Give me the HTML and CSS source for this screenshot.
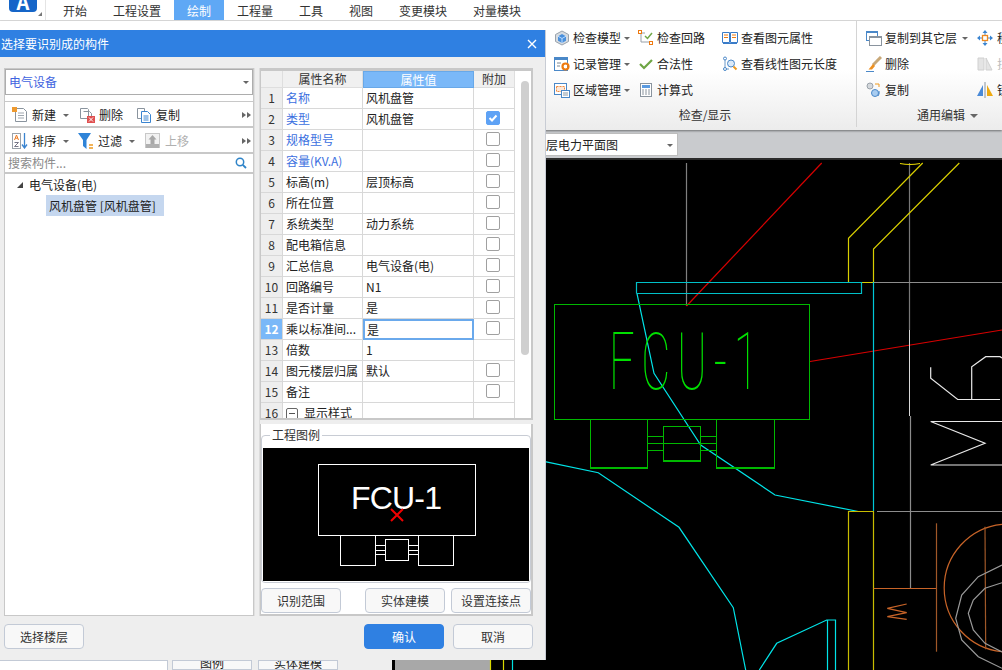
FILE: index.html
```html
<!DOCTYPE html>
<html lang="zh">
<head>
<meta charset="utf-8">
<title>选择要识别成的构件</title>
<link rel="stylesheet" href="styles.css">
</head>
<body>
<div class="app">
  <header class="tabbar">
    <div class="logo"><span class="logo-a">A</span></div>
    <span class="logo-tri"></span>
    <nav class="tabs">
      <span class="tab">开始</span><span class="tab">工程设置</span><span class="tab active">绘制</span><span class="tab">工程量</span><span class="tab">工具</span><span class="tab">视图</span><span class="tab">变更模块</span><span class="tab">对量模块</span>
    </nav>
  </header>
  <section class="ribbon">
    <div class="group g-check">
      <div class="cols">
        <div class="col c1">
          <div class="ri"><svg class="ic" viewBox="0 0 16 16"><path d="M8 1l6.500 3.500v7L8 15l-6.500-3.500v-7z" fill="#d6dbe0" stroke="#9aa3ad"/><path d="M8 4l4 2.200v4.600L8 13l-4-2.200V6.200z" fill="#4a90dc"/><path d="M4 6.200L8 8.500l4-2.300M8 8.500V13" stroke="#bcdcff" fill="none"/></svg><span>检查模型</span><i class="caret"></i></div>
          <div class="ri"><svg class="ic" viewBox="0 0 16 16"><rect x="0.500" y="1.500" width="13" height="13" fill="#fff" stroke="#4a88c8"/><rect x="0" y="1" width="14" height="3" fill="#4a88c8"/><path d="M3 7h4M3 10h3" stroke="#7a8894"/><circle cx="11.500" cy="10.500" r="3" fill="none" stroke="#ee7a10" stroke-width="2.200"/></svg><span>记录管理</span><i class="caret"></i></div>
          <div class="ri"><svg class="ic" viewBox="0 0 16 16"><rect x="0.500" y="1.500" width="12" height="11" fill="#fff" stroke="#4a88c8"/><rect x="2.500" y="4.500" width="8" height="5" fill="#fde8d8" stroke="#ee8a40" stroke-dasharray="2 1"/><rect x="7.500" y="8.500" width="8" height="7" fill="#fff" stroke="#4a88c8"/><path d="M9 11h5M9 13h5" stroke="#8a98a4"/></svg><span>区域管理</span><i class="caret"></i></div>
        </div>
        <div class="col c2">
          <div class="ri"><svg class="ic" viewBox="0 0 16 16"><path d="M3 3v9h9M3 3h4" stroke="#98a0a8" fill="none"/><rect x="0.500" y="0.500" width="3" height="3" fill="#fff" stroke="#ee7a10"/><rect x="11.500" y="11.500" width="3" height="3" fill="#fff" stroke="#ee7a10"/><path d="M7 6l2.500 2.500L14 3" stroke="#70a848" stroke-width="1.500" fill="none"/></svg><span>检查回路</span></div>
          <div class="ri"><svg class="ic" viewBox="0 0 16 16"><path d="M2 8l4 4 8-8" stroke="#6ea544" stroke-width="2.200" fill="none"/></svg><span>合法性</span></div>
          <div class="ri"><svg class="ic" viewBox="0 0 16 16"><rect x="2.500" y="1.500" width="11" height="13" fill="#fff" stroke="#8a949e"/><rect x="4" y="3" width="8" height="3" fill="#5a9ae0"/><path d="M4 8h2M7 8h2M10 8h2M4 10h2M7 10h2M10 10h2M4 12h2M7 12h2M10 12h2" stroke="#8a949e"/></svg><span>计算式</span></div>
        </div>
        <div class="col c3">
          <div class="ri"><svg class="ic" viewBox="0 0 16 16"><path d="M0.500 2.500h7v10h-7zM8.500 2.500h7v10h-7z" fill="#fff" stroke="#3a7cc8"/><path d="M2 5h4M2 7.500h4M10 5h4M10 7.500h4" stroke="#ee7a10"/><path d="M1 13.500h14" stroke="#3a7cc8"/></svg><span>查看图元属性</span></div>
          <div class="ri"><svg class="ic" viewBox="0 0 16 16"><path d="M3 3v10h4" stroke="#6a98c8" fill="none"/><circle cx="3" cy="2.500" r="1.500" fill="#fff" stroke="#4a88c8"/><circle cx="3" cy="13" r="1.500" fill="#fff" stroke="#4a88c8"/><circle cx="9" cy="7.500" r="3.500" fill="#dceaf8" stroke="#4a88c8"/><path d="M11.500 10.500l3 3" stroke="#ee9a20" stroke-width="2"/></svg><span>查看线性图元长度</span></div>
          <div class="ri"></div>
        </div>
      </div>
      <div class="glabel">检查/显示</div>
    </div>
    <div class="group g-edit">
      <div class="cols">
        <div class="col c4">
          <div class="ri"><svg class="ic" viewBox="0 0 16 16"><rect x="0.500" y="1.500" width="11" height="9" fill="#fff" stroke="#4a88c8"/><rect x="0" y="1" width="12" height="2" fill="#4a88c8"/><rect x="3.500" y="6.500" width="12" height="9" fill="#fff" stroke="#8a949e"/><rect x="3" y="6" width="13" height="2" fill="#8a949e"/></svg><span>复制到其它层</span><i class="caret far"></i></div>
          <div class="ri"><svg class="ic" viewBox="0 0 16 16"><path d="M15 1L7 9" stroke="#c8a878" stroke-width="3"/><path d="M7 8l2 2-3 3.500H2.500z" fill="#ee9020"/><path d="M0 15.500h8" stroke="#4a88c8"/></svg><span>删除</span></div>
          <div class="ri"><svg class="ic" viewBox="0 0 16 16"><circle cx="4" cy="4" r="3" fill="#d4d8dc" stroke="#9aa2aa"/><circle cx="9" cy="11" r="3.500" fill="#a8ccf0" stroke="#4a88c8"/><path d="M9 2h4v3" stroke="#ee9a20" fill="none"/><path d="M13 9a4.500 5 0 0 1-1 5" stroke="#4a88c8" fill="none"/></svg><span>复制</span></div>
        </div>
        <div class="col c5">
          <div class="ri"><svg class="ic" viewBox="0 0 16 16"><path d="M8 0l2.500 3h-5zM8 16l-2.500-3h5zM0 8l3-2.500v5zM16 8l-3 2.500v-5z" fill="#3a84d0"/><path d="M3 8h10M8 3v10" stroke="#3a84d0"/><rect x="5.500" y="5.500" width="5" height="5" fill="#fff" stroke="#ee8a20" stroke-width="1.300"/></svg><span>移动</span></div>
          <div class="ri"><svg class="ic" viewBox="0 0 16 16"><path d="M1 14V2h6v12zM9 14V2l6 12z" fill="#e4e4e4" stroke="#d0d0d0"/></svg><span class="off">拉伸</span></div>
          <div class="ri"><svg class="ic" viewBox="0 0 16 16"><path d="M0 14L6 3v11z" fill="#4a8ad8"/><path d="M10 14V3l6 11z" fill="#eeaa10"/><path d="M8 0v16" stroke="#8a949e"/></svg><span>镜像</span></div>
        </div>
      </div>
      <div class="glabel"><span>通用编辑</span><i class="caret wide"></i></div>
    </div>
  </section>
  <div class="subbar">
    <div class="layer-combo"><span>层电力平面图</span><i class="caret"></i></div>
  </div>
  <main class="work">
    <div class="under">
      <div class="under-panel"></div>
      <div class="under-tab">图例</div>
      <div class="under-tab">实体建模</div>
    </div>
    <svg class="cad" viewBox="392 160 610 510" preserveAspectRatio="none" role="img" aria-label="CAD 图纸">
      <rect x="395" y="160" width="95" height="510" fill="#a8a8a8"/>
      <g fill="none" stroke-width="1.200">
        <path d="M490.500 655v15M503.500 655v15" stroke="#d8d800"/>
        <path d="M512.500 655v15" stroke="#00e0e0"/>
        <path d="M686.500 163V306" stroke="#808080"/>
        <path d="M821.700 163L686.500 306" stroke="#d80000"/>
        <path d="M810 361.500L1002 330" stroke="#d80000"/>
        <path d="M909.500 163V330" stroke="#787878"/>
        <path d="M909.500 330V416" stroke="#d8d8d8" stroke-width="1"/>
        <path d="M910.500 416V588" stroke="#8c8c8c"/>
        <path d="M874 282.500H1002M877 511.500H1002" stroke="#8c8c8c"/>
        <path d="M922.700 163L848.500 238.300V282.500H873.500V249L959.300 163" stroke="#d8ce00"/>
        <path d="M900 163.500q10 2 20 0" stroke="#e8d800"/>
        <path d="M636.500 293.500V282.500H861.500V293.500H636.500" stroke="#00c0c8"/>
        <path d="M873.500 282V511" stroke="#00c8d8"/>
        <path d="M637 293.500L654 373.300L700.700 445L775 495L858.300 511.500" stroke="#00e4e8"/>
        <path d="M545 461.700L598.300 472.700L679 527.300L733.300 607.700L745.700 670" stroke="#00e4e8"/>
        <path d="M759.300 670L776.700 643.300L826.700 620H835.500V670M827.500 620V670" stroke="#00e4e8"/>
        <path d="M848.500 670V511.500H873.500V670" stroke="#c8bc00"/>
        <g stroke="#00b800" stroke-width="1.100" shape-rendering="crispEdges">
          <rect x="554.500" y="304.500" width="255" height="115"/>
          <rect x="590.500" y="419.500" width="57" height="48.500"/>
          <rect x="716.500" y="419.500" width="58" height="48.500"/>
          <rect x="663.500" y="426.500" width="37" height="34.500"/>
          <path d="M647.500 436.500H663.500M700.500 436.500H716.500M647.500 443.500H716.500M647.500 450.500H663.500M700.500 450.500H716.500"/>
        </g>
        <path d="M930.700 367.300V378.300L957.700 399.500H1000M971.700 399.500V366.700L985.700 356.700H1000L1002 358" stroke="#e8e8e8"/>
        <path d="M1002 421.500H930.700L985 443.300L930.700 465H1002" stroke="#e8e8e8"/>
        <path d="M873.500 588.500H936.500" stroke="#c86428"/>
        <path d="M936.500 523.300V651.700" stroke="#a05828"/>
        <path d="M1002 524.300A64 64 0 0 0 1002 651.700" stroke="#c86428"/>
        <path d="M985 526.700L985.700 649.300" stroke="#a05828"/>
        <path d="M906.700 604L887.300 608.300L906.700 612.700L887.300 616.700L906.700 619.300" stroke="#c86428"/>
        <path d="M1002 565L978.300 576.700L961.700 595L955.700 618.300L961.700 640L978.300 656.700L1002 668.300" stroke="#9a9a9a"/>
        <path d="M1002 582.700L985 588.300L973.300 600L968.300 613.300L973.300 630L985 643.300L1002 652" stroke="#9a9a9a"/>
      </g>
      <text class="cad-text" transform="translate(609 389) scale(0.56 1)">FCU-1</text>
    </svg>
  </main>

  <div class="dialog">
    <div class="dlg-title"><span>选择要识别成的构件</span><svg class="dlg-x" viewBox="0 0 10 10"><path d="M1 1l8 8M9 1l-8 8" stroke="#fff" stroke-width="1.400"/></svg></div>
    <div class="dlg-main">
      <aside class="left">
        <div class="combo-wrap"><div class="combo"><span>电气设备</span><i class="caret"></i></div></div>
        <div class="tb">
          <span class="tbtn"><svg class="ic" viewBox="0 0 16 16"><path d="M3.500 1.500h8l3 3v10h-11z" fill="#fff" stroke="#8a949e"/><path d="M6 6h6M6 8.500h6M6 11h6" stroke="#a0a8b0"/><rect x="0" y="0" width="5" height="5" fill="#ee9a30"/></svg><span>新建</span><i class="caret"></i></span>
          <span class="tbtn"><svg class="ic" viewBox="0 0 16 16"><path d="M1.500 1.500h7l1 1v9h-8z" fill="#fff" stroke="#8a949e"/><path d="M4.500 4.500h6l2 2v4" fill="none" stroke="#8a949e"/><rect x="8" y="9" width="8" height="7" fill="#e05050"/><path d="M10 10.500l4 4M14 10.500l-4 4" stroke="#fff"/></svg><span>删除</span></span>
          <span class="tbtn"><svg class="ic" viewBox="0 0 16 16"><path d="M1.500 1.500h7v10h-7z" fill="#fff" stroke="#8a949e"/><path d="M5.500 4.500h6l3 3v8h-9z" fill="#fff" stroke="#3a84d0"/><path d="M7.500 9h5M7.500 11h5M7.500 13h5" stroke="#3a84d0"/></svg><span>复制</span></span>
          <span class="more"><i></i><i></i></span>
        </div>
        <div class="tb r2">
          <span class="tbtn"><svg class="ic" viewBox="0 0 16 16"><rect x="0.500" y="0.500" width="8" height="15" fill="#fff" stroke="#9aa2aa"/><path d="M2.500 7l2-5 2 5M3.300 5.200h2.400" stroke="#ee7a20" fill="none"/><path d="M2.500 9.500h4l-4 4h4" stroke="#778" fill="none"/><path d="M12.500 0v14M10 11.500l2.500 3.500 2.500-3.500" stroke="#3a84d0" fill="none" stroke-width="1.300"/></svg><span>排序</span><i class="caret"></i></span>
          <span class="tbtn"><svg class="ic" viewBox="0 0 16 16"><path d="M0 0h13L8.500 7v9L5 13V7z" fill="#2f84d8"/><path d="M11 12h4M11 15h4" stroke="#ee9a20" stroke-width="1.300"/></svg><span>过滤</span><i class="caret"></i></span>
          <span class="tbtn dim"><svg class="ic" viewBox="0 0 16 16"><rect x="0.500" y="0.500" width="14" height="14" fill="#f2f2f2" stroke="#c8c8c8"/><rect x="1" y="11" width="13" height="4" fill="#b0b0b0"/><path d="M7.500 2l4 4.500H9.500V11h-4V6.500h-2z" fill="#a8a8a8"/></svg><span>上移</span></span>
          <span class="more"><i></i><i></i></span>
        </div>
        <div class="search"><span>搜索构件...</span><svg class="mag" viewBox="0 0 12 12"><circle cx="5" cy="5" r="3.700" fill="none" stroke="#2f84c8" stroke-width="1.500"/><path d="M7.800 7.800L11 11" stroke="#2f84c8" stroke-width="1.800"/></svg></div>
        <div class="tree">
          <div class="node"><i class="tri"></i><span>电气设备(电)</span></div>
          <div class="leaf"><span>风机盘管 [风机盘管]</span></div>
        </div>
      </aside>
      <div class="split"></div>
      <section class="right">
        <div class="grid-area">
          <div class="grid-clip">
          <table class="grid">
            <colgroup><col class="w-n"><col class="w-a"><col class="w-b"><col class="w-c"></colgroup>
            <thead><tr><th></th><th>属性名称</th><th class="sel">属性值</th><th>附加</th></tr></thead>
            <tbody>
              <tr><td class="n">1</td><td class="blue">名称</td><td>风机盘管</td><td></td></tr>
              <tr><td class="n">2</td><td class="blue">类型</td><td>风机盘管</td><td class="k"><b class="cb on"><svg viewBox="0 0 14 14"><path d="M3.500 7l2.500 2.500 4.500-5" stroke="#fff" stroke-width="2" fill="none"/></svg></b></td></tr>
              <tr><td class="n">3</td><td class="blue">规格型号</td><td></td><td class="k"><b class="cb"></b></td></tr>
              <tr><td class="n">4</td><td class="blue">容量(KV.A)</td><td></td><td class="k"><b class="cb"></b></td></tr>
              <tr><td class="n">5</td><td>标高(m)</td><td>层顶标高</td><td class="k"><b class="cb"></b></td></tr>
              <tr><td class="n">6</td><td>所在位置</td><td></td><td class="k"><b class="cb"></b></td></tr>
              <tr><td class="n">7</td><td>系统类型</td><td>动力系统</td><td class="k"><b class="cb"></b></td></tr>
              <tr><td class="n">8</td><td>配电箱信息</td><td></td><td class="k"><b class="cb"></b></td></tr>
              <tr><td class="n">9</td><td>汇总信息</td><td>电气设备(电)</td><td class="k"><b class="cb"></b></td></tr>
              <tr><td class="n">10</td><td>回路编号</td><td>N1</td><td class="k"><b class="cb"></b></td></tr>
              <tr><td class="n">11</td><td>是否计量</td><td>是</td><td class="k"><b class="cb"></b></td></tr>
              <tr><td class="n cur">12</td><td>乘以标准间...</td><td class="edit">是</td><td class="k"><b class="cb"></b></td></tr>
              <tr><td class="n">13</td><td>倍数</td><td>1</td><td></td></tr>
              <tr><td class="n">14</td><td>图元楼层归属</td><td>默认</td><td class="k"><b class="cb"></b></td></tr>
              <tr><td class="n">15</td><td>备注</td><td></td><td class="k"><b class="cb"></b></td></tr>
              <tr><td class="n">16</td><td class="sect"><i class="minus"></i>显示样式</td><td></td><td></td></tr>
            </tbody>
          </table>
          </div>
          <div class="vbar"><div class="thumb"></div></div>
        </div>
        <div class="lower">
          <fieldset class="legend-box">
            <legend>工程图例</legend>
            <svg class="preview" viewBox="263 448 266 133" role="img" aria-label="工程图例">
              <g fill="none" stroke="#fff" stroke-width="1" shape-rendering="crispEdges">
                <rect x="318.500" y="464.500" width="157" height="71"/>
                <rect x="340.500" y="535.500" width="35" height="30"/>
                <rect x="418.500" y="535.500" width="35" height="30"/>
                <rect x="385.500" y="539.500" width="23" height="21"/>
                <path d="M375.500 545.500H385.500M408.500 545.500H418.500M375.500 550.500H385.500M408.500 550.500H418.500M375.500 554.500H385.500M408.500 554.500H418.500"/>
              </g>
              <text class="pv-text" x="351" y="509">FCU-1</text>
              <path d="M391 509l12 12M403 509l-12 12" stroke="#f00000" stroke-width="2"/>
            </svg>
          </fieldset>
          <div class="lower-btns">
            <button class="btn">识别范围</button>
            <span class="grow"></span>
            <button class="btn">实体建模</button>
            <button class="btn">设置连接点</button>
          </div>
        </div>
      </section>
    </div>
    <footer class="dlg-foot">
      <button class="btn">选择楼层</button>
      <span class="grow"></span>
      <button class="btn primary">确认</button>
      <button class="btn">取消</button>
    </footer>
  </div>
</div>
</body>
</html>
```
FILE: styles.css
```css
* { box-sizing: border-box; }
html, body { margin: 0; padding: 0; }
body {
  width: 1002px;
  height: 670px;
  overflow: hidden;
  font: 12px/16px "Noto Sans CJK SC", "Liberation Sans", sans-serif;
  color: #222;
  background: #fff;
}
i, b { font-style: normal; font-weight: normal; }
.app {
  position: relative;
  width: 1002px;
  height: 670px;
  display: flex;
  flex-direction: column;
  overflow: hidden;
}

/* top tabs */
.tabbar {
  position: relative;
  height: 21px;
  flex: none;
  display: flex;
  align-items: flex-start;
  padding-left: 9px;
  border-bottom: 1px solid #dcdcdc;
  background: #fff;
}
.logo {
  width: 28px;
  height: 12px;
  overflow: hidden;
  background: #1565c8;
  border-radius: 0 0 4px 4px;
  text-align: center;
  color: #fff;
  font-weight: bold;
  font-size: 20px;
  line-height: 4px;
}
.logo-a { display: block; }
.logo-tri {
  position: absolute;
  left: 38px;
  top: 12px;
  width: 0;
  height: 0;
  border-left: 4px solid transparent;
  border-bottom: 4px solid #777;
}
.tabs {
  display: flex;
  margin-left: 8px;
  height: 20px;
  border-left: 1px solid #e4e4e4;
  padding-left: 4px;
}
.tab { padding: 0 13px; height: 20px; line-height: 21px; color: #333; }
.tab.active { background: #5fa8f5; color: #fff; }

/* ribbon */
.ribbon {
  height: 109px;
  flex: none;
  display: flex;
  padding-left: 546px;
  background: linear-gradient(#fff 0%, #fff 45%, #ececec 100%);
  box-shadow: 0 1px 2px rgba(0,0,0,.45);
  position: relative;
}
.group { display: flex; flex-direction: column; padding-top: 4px; }
.g-check { width: 311px; flex: none; border-right: 1px solid #d4d4d4; margin-bottom: 3px; padding-left: 8px; }
.g-edit { flex: 1; padding-left: 9px; overflow: hidden; }
.cols { display: flex; height: 78px; }
.col { display: flex; flex-direction: column; flex: none; }
.c1 { width: 84px; }
.c2 { width: 84px; }
.c3 { width: 120px; }
.c4 { width: 111px; }
.ri { height: 26px; display: flex; align-items: center; white-space: nowrap; color: #222; }
.c5 .ic { margin-right: 4px; }
.ic { width: 16px; height: 16px; flex: none; margin-right: 3px; }
.caret {
  display: inline-block;
  width: 0;
  height: 0;
  border: 3px solid transparent;
  border-top: 3px solid #666;
  border-bottom: 0;
  margin-left: 3px;
  margin-top: 1px;
  flex: none;
}
.caret.far { margin-left: 5px; }
.caret.wide { border-width: 4px; border-bottom: 0; margin-left: 5px; }
.off { color: #bbb; }
.glabel {
  height: 24px;
  display: flex;
  align-items: center;
  justify-content: center;
  color: #333;
}
.g-edit .glabel { justify-content: flex-start; padding-left: 51px; }

/* sub bar */
.subbar {
  height: 30px;
  flex: none;
  padding: 3px 0 0 546px;
  background: #c9cbce;
  border-bottom: 2px solid #2c2c2c;
}
.layer-combo {
  width: 132px;
  height: 23px;
  background: #fff;
  border: 1px solid #bdbdbd;
  border-left: 0;
  display: flex;
  align-items: center;
  justify-content: space-between;
  padding-right: 4px;
  color: #222;
}

/* workspace */
.work { flex: 1; display: flex; background: #000; min-height: 0; }
.under {
  width: 392px;
  flex: none;
  display: flex;
  align-items: flex-start;
  padding-top: 500px;
  background: #eee;
}
.under-panel { width: 168px; height: 10px; background: #fff; border-right: 1px solid #c3cad6; border-top: 1px solid #c3cad6; margin-right: 4px; }
.under-tab {
  width: 80px;
  height: 10px;
  margin-right: 6px;
  background: #f8f8f8;
  border: 1px solid #c3cad6;
  text-align: center;
  line-height: 4px;
  overflow: hidden;
}
.cad { flex: 1; height: 510px; display: block; background: #000; }
.cad-text {
  font: 100 80px Roboto, "Liberation Sans", sans-serif;
  letter-spacing: 12px;
  fill: #00e000;
}

/* dialog */
.dialog {
  position: absolute;
  left: 0;
  top: 30px;
  width: 546px;
  height: 630px;
  background: #eee;
  border-right: 1px solid #c8ccd4;
  display: flex;
  flex-direction: column;
}
.dlg-title {
  height: 27px;
  flex: none;
  background: #2f80e2;
  color: #fff;
  display: flex;
  align-items: center;
  justify-content: space-between;
  padding: 0 8px 0 1px;
}
.dlg-x { width: 10px; height: 10px; }
.dlg-main {
  height: 560px;
  flex: none;
  display: flex;
  padding: 11px 0 0 4px;
}
.left {
  width: 250px;
  height: 548px;
  flex: none;
  display: flex;
  flex-direction: column;
  gap: 2px;
  background: #c8c8c8;
  border: 1px solid #c8c8c8;
}
.combo-wrap { height: 32px; flex: none; background: #fff; margin-bottom: -1px; }
.combo {
  height: 26px;
  border: 1px solid #adadad;
  display: flex;
  align-items: center;
  justify-content: space-between;
  padding: 0 3px 0 3px;
  color: #3e63e0;
  background: #fff;
}
.tb {
  height: 24px;
  flex: none;
  background: #fff;
  display: flex;
  align-items: center;
  padding: 1px 0 0 7px;
}
.tbtn { display: flex; align-items: center; height: 22px; color: #222; }
.tb .tbtn:nth-child(1) { width: 67px; }
.tb .tbtn:nth-child(2) { width: 57px; }
.tb.r2 .tbtn:nth-child(1) { width: 66px; }
.tb.r2 .tbtn:nth-child(2) { width: 67px; }
.tbtn .ic { margin-right: 4px; }
.tbtn .caret { margin-left: 7px; }
.tbtn.dim { color: #b0b0b0; }
.more { margin-left: auto; margin-right: 2px; display: flex; gap: 1px; }
.more i { width: 0; height: 0; border-left: 4px solid #666; border-top: 3.500px solid transparent; border-bottom: 3.500px solid transparent; }
.search {
  height: 18px;
  flex: none;
  background: #fff;
  display: flex;
  align-items: center;
  justify-content: space-between;
  padding: 0 6px 0 3px;
  color: #8a8a8a;
}
.mag { width: 12px; height: 12px; }
.tree { flex: 1; background: #fff; padding: 1px 0 0 10px; min-height: 0; }
.node { height: 19px; display: flex; align-items: center; color: #222; }
.tri {
  width: 0;
  height: 0;
  border-left: 6px solid transparent;
  border-bottom: 6px solid #444;
  margin: 0 6px 0 2px;
}
.leaf { display: inline-block; height: 21px; line-height: 21px; margin-left: 31px; padding: 0 8px 0 3px; background: #c5d7ef; margin-top: 1px; color: #222; white-space: nowrap; }
.split {
  width: 6px;
  flex: none;
  height: 548px;
  background: #eee;
  border-right: 1px solid #dcdcdc;
  border-left: 1px solid #e0e0e0;
}
.right {
  width: 273px;
  height: 549px;
  flex: none;
  display: flex;
  flex-direction: column;
}
.grid-area {
  height: 352px;
  flex: none;
  display: flex;
  background: #fff;
  border-top: 3px solid #c8c8c8;
  border-bottom: 2px solid #c8c8c8;
  border-left: 1px solid #c8c8c8;
  border-right: 2px solid #c8c8c8;
}
.grid-clip { width: 254px; height: 347px; overflow: hidden; flex: none; }
.grid {
  table-layout: fixed;
  width: 254px;
  border-collapse: separate;
  border-spacing: 0;
  color: #222;
}
.w-n { width: 22px; }
.w-a { width: 80px; }
.w-b { width: 111px; }
.w-c { width: 41px; }
.grid th {
  height: 17px;
  font-weight: normal;
  padding: 0;
  text-align: center;
  background: #f0f0f0;
  border-right: 1px solid #dedede;
  border-bottom: 1px solid #dedede;
  color: #333;
  line-height: 14px;
}
.grid th.sel { background: #7ab8f8; color: #fff; border: 1px solid #68a8e8; }
.grid td {
  height: 21px;
  padding: 0 0 2px 3px;
  border-right: 1px solid #d8d8d8;
  border-bottom: 1px solid #d8d8d8;
  white-space: nowrap;
  overflow: hidden;
  line-height: 17px;
}
.grid td.n { padding: 0 0 2px; text-align: center; background: #eee; color: #333; }
.grid td.cur { background: #7ab8f8; color: #fff; font-weight: bold; }
.grid td.blue { color: #3b6fe0; }
.grid td.edit { border: 2px solid #6aa9ec; padding: 0 0 0 2px; }
.grid td.k { padding: 0; }
.cb {
  display: block;
  width: 14px;
  height: 14px;
  margin: 0 0 2px 12px;
  border: 1px solid #a0a0a0;
  border-radius: 2px;
  background: #fff;
}
.cb svg { display: block; width: 14px; height: 14px; margin: -1px; }
.cb.on { background: #5ea2f5; border-color: #5ea2f5; }
.minus {
  display: inline-block;
  width: 12px;
  height: 12px;
  border: 1px solid #666;
  border-radius: 2px;
  margin-right: 6px;
  vertical-align: -2px;
  position: relative;
}
.minus::after {
  content: "";
  position: absolute;
  left: 2px;
  top: 4px;
  width: 6px;
  height: 1px;
  background: #555;
}
.vbar { flex: 1; padding: 10px 2px 0 6px; background: #fff; }
.thumb { height: 274px; background: #cfcfcf; border-radius: 4px; }
.lower {
  height: 192px;
  margin-top: 4px;
  flex: none;
  background: #fff;
  border: 2px solid #c8c8c8;
  border-width: 0 2px 2px 1px;
  padding: 3px 0 0;
}
.legend-box {
  margin: 0;
  padding: 4px 1px 1px;
  border: 1px solid #c8ccd4;
  border-radius: 4px;
  min-width: 0;
}
.legend-box legend { margin-left: 7px; padding: 0 2px; height: 17px; line-height: 16px; color: #333; }
.preview { display: block; width: 266px; height: 133px; background: #000; }
.pv-text { font: 32px "Liberation Sans", sans-serif; letter-spacing: -0.8px; fill: #fff; }
.lower-btns { display: flex; gap: 6px; margin-top: 5px; }
.grow { flex: 1; }
.btn {
  width: 80px;
  height: 25px;
  padding: 0;
  font: inherit;
  color: #333;
  background: #f8f8f8;
  border: 1px solid #c3cad6;
  border-radius: 4px;
}
.btn.primary { background: #2f80e2; border-color: #2f80e2; color: #fff; }
.dlg-foot {
  display: flex;
  gap: 9px;
  padding: 7px 12px 0 4px;
}
```
